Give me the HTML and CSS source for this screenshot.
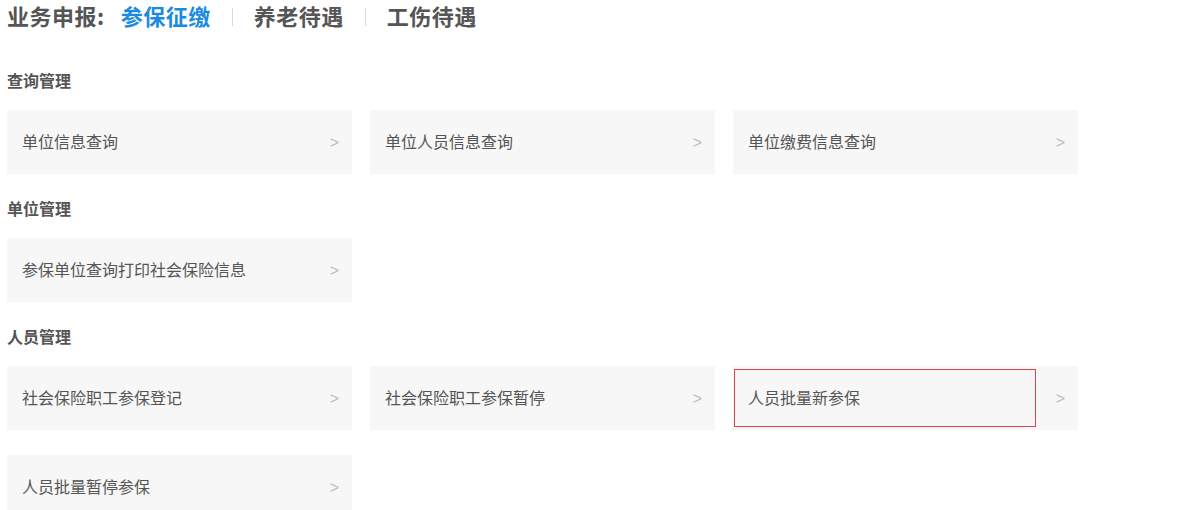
FILE: index.html
```html
<!DOCTYPE html>
<html lang="zh-CN">
<head>
    <meta charset="UTF-8">
    <meta name="viewport" content="width=device-width, initial-scale=1.0">
    <title>业务申报</title>
    <link rel="stylesheet" href="styles.css">
</head>
<body>
    <header class="tabs">
        <span class="tabs-label">业务申报:</span>
        <a href="#" class="tab active">参保征缴</a>
        <span class="sep"></span>
        <a href="#" class="tab">养老待遇</a>
        <span class="sep"></span>
        <a href="#" class="tab">工伤待遇</a>
    </header>

    <section class="group">
        <h2>查询管理</h2>
        <div class="cards">
            <a href="#" class="card"><span class="label">单位信息查询</span><span class="arrow">&gt;</span></a>
            <a href="#" class="card"><span class="label">单位人员信息查询</span><span class="arrow">&gt;</span></a>
            <a href="#" class="card"><span class="label">单位缴费信息查询</span><span class="arrow">&gt;</span></a>
        </div>
    </section>

    <section class="group">
        <h2>单位管理</h2>
        <div class="cards">
            <a href="#" class="card"><span class="label">参保单位查询打印社会保险信息</span><span class="arrow">&gt;</span></a>
        </div>
    </section>

    <section class="group">
        <h2>人员管理</h2>
        <div class="cards">
            <a href="#" class="card"><span class="label">社会保险职工参保登记</span><span class="arrow">&gt;</span></a>
            <a href="#" class="card"><span class="label">社会保险职工参保暂停</span><span class="arrow">&gt;</span></a>
            <a href="#" class="card"><span class="label focused">人员批量新参保</span><span class="arrow">&gt;</span></a>
            <a href="#" class="card"><span class="label">人员批量暂停参保</span><span class="arrow">&gt;</span></a>
        </div>
    </section>
</body>
</html>
```

FILE: styles.css
```css
body {
    margin: 0;
    padding: 0 7px;
    font-family: "Noto Sans CJK SC", "Noto Sans", sans-serif;
    color: #555;
    background: #fff;
}

a {
    text-decoration: none;
    color: inherit;
}

.tabs {
    display: flex;
    align-items: center;
    height: 26px;
    padding-top: 2px;
    line-height: 26px;
    font-size: 22px;
    font-weight: bold;
    letter-spacing: 0.5px;
    color: #555;
}

.tabs-label {
    margin-right: 16px;
}

.tab.active {
    color: #1b8bdf;
}

.sep {
    width: 1px;
    height: 18px;
    margin: 4px 21px 0;
    background: #d8d8d8;
}

.group h2 {
    margin: 42px 0 20px;
    font-size: 16px;
    line-height: 20px;
    font-weight: bold;
    color: #555;
}

.group + .group h2 {
    margin-top: 24px;
}

.cards {
    display: grid;
    grid-template-columns: repeat(3, 345px);
    column-gap: 18px;
    row-gap: 25px;
}

.card {
    display: flex;
    align-items: center;
    height: 64px;
    padding: 0 13px 0 1px;
    box-sizing: border-box;
    background: #f7f7f7;
    font-size: 16px;
    color: #555;
}

.card .label {
    display: flex;
    align-items: center;
    width: 302px;
    height: 58px;
    padding: 0 0 3px 13px;
    box-sizing: border-box;
    border: 1px solid transparent;
}

.card .label.focused {
    border-color: #d9474c;
}

.card .arrow {
    margin-left: auto;
    margin-top: 2px;
    font-family: "Liberation Sans", sans-serif;
    font-size: 16px;
    color: #bbb;
}
```
